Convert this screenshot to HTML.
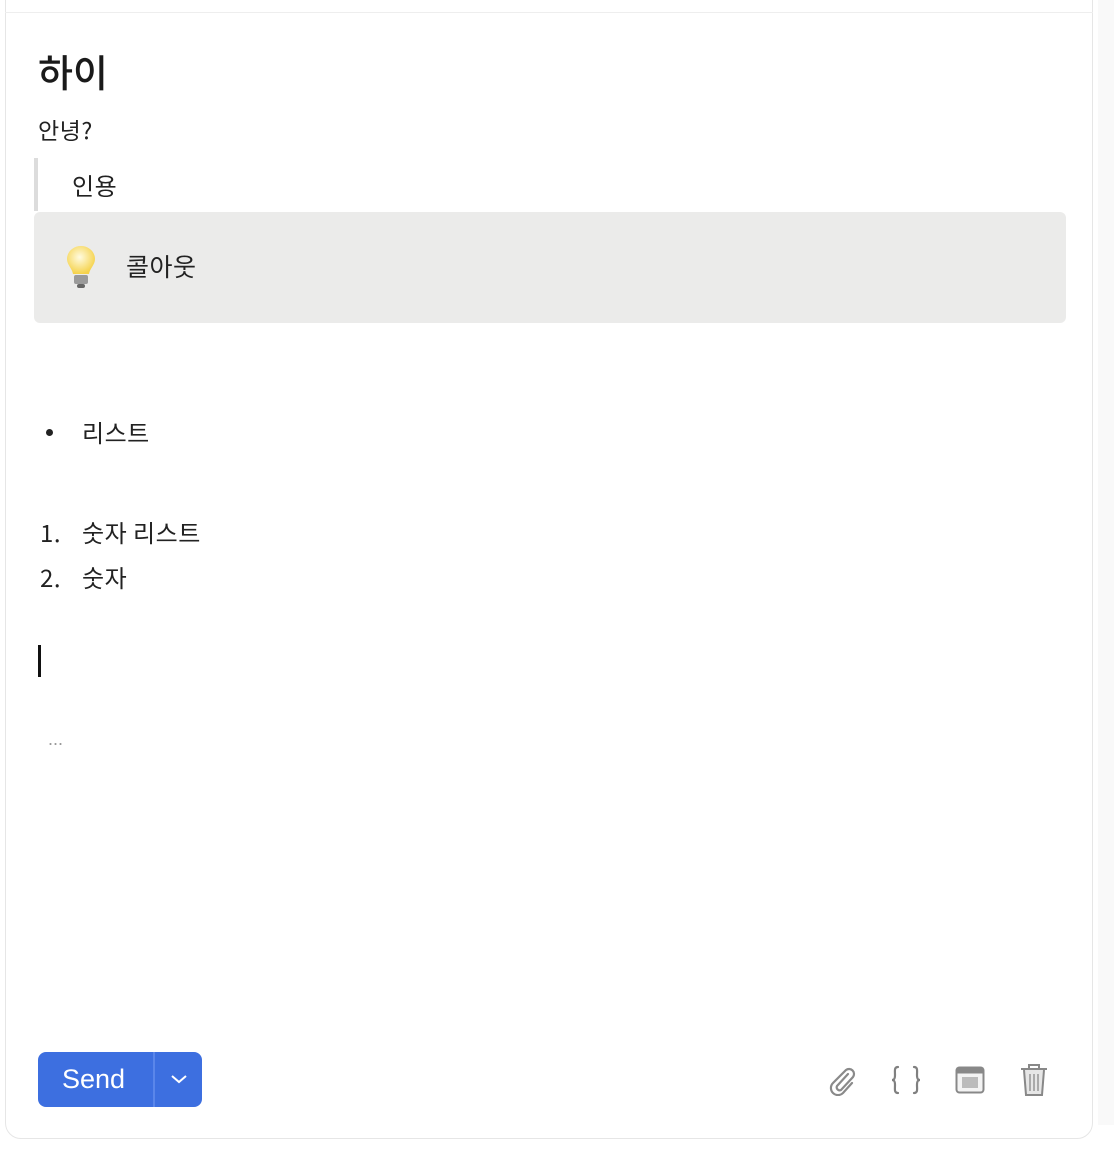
<!DOCTYPE html>
<html><head><meta charset="utf-8"><style>
body{margin:0;width:1114px;height:1160px;background:#fff;font-family:"Liberation Sans","Noto Sans CJK KR",sans-serif;color:#222;position:relative;overflow:hidden}
.card{position:absolute;left:5px;top:-20px;width:1088px;height:1159px;border:1px solid #e6e6e6;border-radius:16px;box-sizing:border-box}
.topline{position:absolute;left:5px;top:12px;width:1088px;height:1px;background:#eee}
.side{position:absolute;left:1098px;top:0;width:16px;height:1125px;background:#f9f9f9}
.t{position:absolute;white-space:nowrap;line-height:1}
.k{font-family:"Noto Sans CJK KR","Liberation Sans",sans-serif;letter-spacing:0.5px}
</style></head><body>
<div class="side"></div>
<div class="card"></div>
<div class="topline"></div>
<div class="t k" style="left:38px;top:52px;font-size:38px;font-weight:500;color:#1a1a1a;letter-spacing:0">하이</div>
<div class="t k" style="left:38px;top:118px;font-size:23px">안녕?</div>
<div style="position:absolute;left:34px;top:158px;width:4px;height:53px;background:#dcdcdc"></div>
<div class="t k" style="left:72px;top:173px;font-size:24px">인용</div>
<div style="position:absolute;left:34px;top:212px;width:1032px;height:111px;background:#ebebea;border-radius:6px"></div>
<svg style="position:absolute;left:64px;top:244px" width="34" height="48" viewBox="0 0 34 48"><defs><radialGradient id="g" cx="45%" cy="40%" r="60%"><stop offset="0" stop-color="#fffbe0"/><stop offset="1" stop-color="#f5d24a"/></radialGradient></defs><path d="M17 2C9 2 3 8 3 15c0 6 5 9 6 15h16c1-6 6-9 6-15C31 8 25 2 17 2z" fill="url(#g)"/><rect x="10" y="31" width="14" height="9" rx="2" fill="#9a9a9a"/><rect x="13" y="40" width="8" height="4" rx="2" fill="#666"/></svg>
<div class="t k" style="left:126px;top:254px;font-size:25px">콜아웃</div>
<div style="position:absolute;left:46px;top:429px;width:7px;height:7px;border-radius:50%;background:#222"></div>
<div class="t k" style="left:82px;top:420px;font-size:24px">리스트</div>
<div class="t k" style="left:40px;top:520px;font-size:24px">1.</div>
<div class="t k" style="left:82px;top:520px;font-size:24px">숫자 리스트</div>
<div class="t k" style="left:40px;top:565px;font-size:24px">2.</div>
<div class="t k" style="left:82px;top:565px;font-size:24px">숫자</div>
<div style="position:absolute;left:38px;top:645px;width:3px;height:32px;background:#111"></div>
<div class="t" style="left:48px;top:730px;font-size:18px;color:#999">...</div>
<div style="position:absolute;left:38px;top:1052px;width:164px;height:55px;background:#3d6fe0;border-radius:8px"></div>
<div style="position:absolute;left:153px;top:1052px;width:2px;height:55px;background:#5a86ea"></div>
<div class="t" style="left:62px;top:1066px;font-size:27px;color:#fff">Send</div>
<svg style="position:absolute;left:170px;top:1073px" width="18" height="12" viewBox="0 0 18 12"><path d="M2 3l7 6 7-6" fill="none" stroke="#fff" stroke-width="2"/></svg>
<svg style="position:absolute;left:826px;top:1064px" width="32" height="32" viewBox="0 0 32 32" fill="none" stroke="#8a8a8a" stroke-width="2.2" stroke-linecap="round"><path d="M22 10L11 22a3 3 0 0 0 4 4l12-13a5 5 0 0 0-7-7L7 19a7 7 0 0 0 10 10l9-10"/></svg>
<svg style="position:absolute;left:890px;top:1064px" width="32" height="32" viewBox="0 0 32 32" fill="none" stroke="#808080" stroke-width="2.2" stroke-linecap="round"><path d="M8 3C4 3 5 7 5 11s-1 5-3 5c2 0 3 1 3 5s-1 8 3 8"/><path d="M24 3c4 0 3 4 3 8s1 5 3 5c-2 0-3 1-3 5s1 8-3 8"/></svg>
<svg style="position:absolute;left:955px;top:1066px" width="30" height="28" viewBox="0 0 30 28"><rect x="1.5" y="1.5" width="27" height="25" rx="3" fill="#f3f3f3" stroke="#888" stroke-width="2"/><rect x="1.5" y="1.5" width="27" height="6" fill="#888"/><g fill="#bbb"><rect x="7" y="11" width="16" height="11"/></g></svg>
<svg style="position:absolute;left:1019px;top:1063px" width="30" height="34" viewBox="0 0 30 34" fill="none" stroke="#888" stroke-width="2"><path d="M2 6h26M10 6V2h10v4"/><path d="M5 7l2 25h16l2-25" fill="#e6e6e6"/><path d="M11 11v17M15 11v17M19 11v17" stroke="#aaa"/></svg>
</body></html>
